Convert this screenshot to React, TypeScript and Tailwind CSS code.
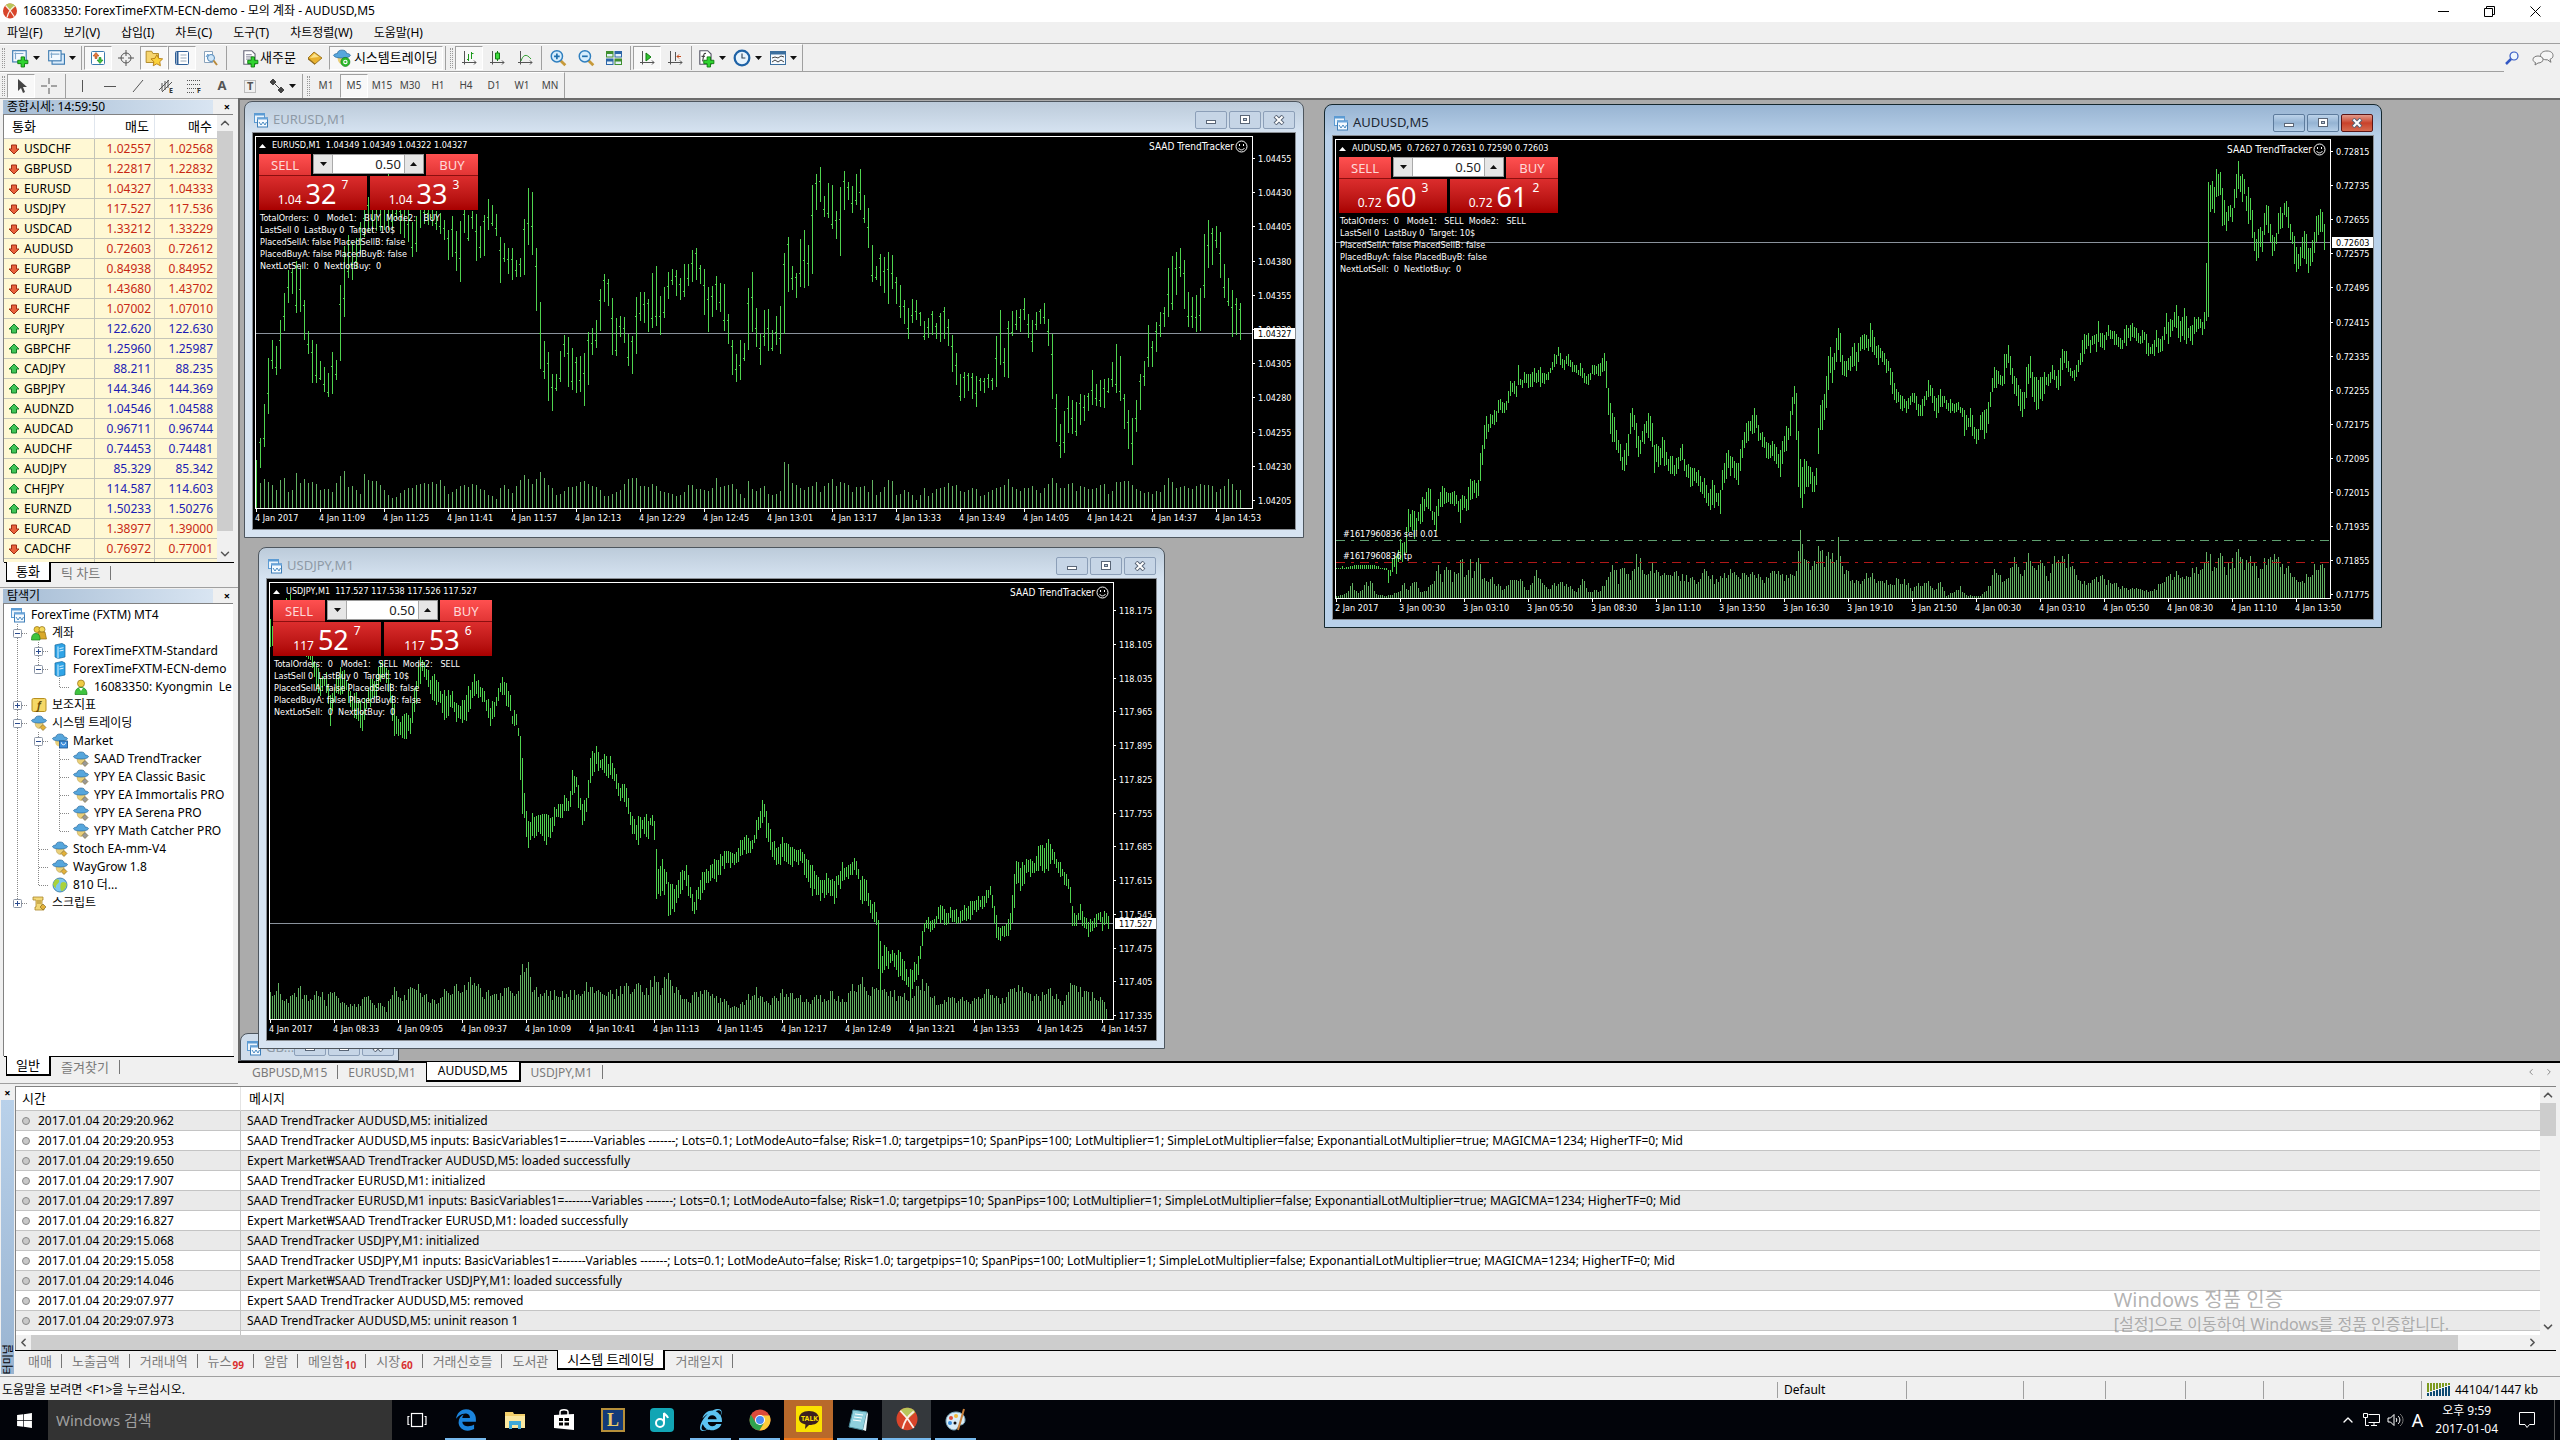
import type { ReactNode } from "react";
import { FaEdgeLegacy, FaInternetExplorer, FaWindows } from "react-icons/fa";
import { ChevronDown, ChevronLeft, ChevronRight, ChevronUp } from "lucide-react";

/* ------------------------------------------------------------------ */
/* Chart data                                                          */
/* ------------------------------------------------------------------ */

// A digitised piece of a series: every point is x, high, low (or x, top)
type Segment = { x: number; y: number; sx: number; sy: number; data: string };

const eurusd: Segment[] = [
  {
    x: -13, y: -33, sx: 2.904, sy: 3,
    data: `47,1080,1220 59,1010,1095 71,900,1035 82,765,935 94,715,795 106,740,828 118,645,803 129,572,678 141,500,600 152,505,580 164,480,648 176,500,633 187,612,730 199,705,768 211,722,866 222,732,846 234,790,838 246,803,885 257,822,893 269,743,880 280,785,836 292,520,776 304,420,628 316,400,510 327,430,545 339,410,500 350,360,460 362,300,400 420,250,390 430,200,390 445,330,385 455,320,350 468,320,420 480,300,412 490,320,430 502,380,480 513,340,450 525,290,370 560,330,380 583,340,404 595,365,425 606,395,492 617,340,468 629,403,520 640,360,548 652,325,378 664,350,430 675,330,380 687,345,498 699,385,468 710,340,468 722,288,375 734,320,380 745,345,412 757,424,576 768,430,475 780,445,530 792,445,543 803,485,530 815,473,530 827,330,525 838,252,418 850,282,476 861,468,656 873,632,834 884,735,836 896,758,912 908,835,938 920,818,858 931,740,845 943,697,755 955,713,890 966,752,866 978,775,882 990,766,873 1001,758,927 1013,682,836 1025,685,743 1036,655,743 1048,543,678 1059,518,592 1071,540,623 1083,608,806 1094,665,758 1106,642,700 1118,652,737 1129,714,815 1141,708,825 1152,565,748 1164,577,640 1175,575,675 1187,602,700 1199,495,680 1210,498,678 1222,608,713 1234,546,635 1245,510,587 1257,507,545 1269,510,600 1280,541,600 1292,480,587 1303,494,552 1315,440,545 1326,444,540 1338,508,555 1350,508,670 1361,573,700 1373,555,640 1384,522,628 1396,553,638 1407,553,700 1419,657,737 1431,734,846 1442,768,845 1454,711,840 1466,735,768 1478,514,743 1489,518,684 1501,654,758 1512,712,804 1524,611,723 1536,632,763 1547,703,752 1559,635,730`,
  },
  {
    x: 527, y: -33, sx: 2.904, sy: 3,
    data: `0,617,762 12,455,700 24,408,568 36,508,570 47,518,595 59,410,558 71,387,565 83,443,558 94,234,517 106,222,303 118,198,308 129,298,358 141,242,353 152,255,390 164,342,420 176,248,477 187,210,312 199,250,297 211,258,348 222,216,312 234,207,333 246,300,376 257,326,456 269,453,561 281,507,536 292,453,562 304,473,582 315,453,615 327,468,558 339,546,623 350,555,660 362,608,673 374,628,726 385,590,658 397,602,660 408,642,680 420,665,726 431,652,713 443,630,705 455,678,718 466,632,726 478,618,716 490,665,743 501,710,826 513,768,862 525,835,912 536,813,890 548,820,868 559,818,900 571,830,926 583,835,862 594,835,882 606,818,860 617,835,872 629,686,858 641,617,780 652,765,840 664,645,834 675,630,690 687,630,690 699,625,698 710,588,655 722,650,723 734,662,762 745,630,678 757,628,672 769,603,672 780,666,750 792,710,930 803,908,1040 815,985,1080 827,920,1053 838,882,990 850,903,1005 861,908,1008 873,877,968 885,888,963 896,876,927 908,798,912 920,865,918 931,837,923 943,837,924 954,835,873 966,777,860 978,723,882 989,777,905 1001,903,1005 1012,933,1053 1024,957,1101 1036,888,972 1047,810,923 1059,777,846 1071,652,792 1082,735,801 1094,652,746 1106,633,700 1117,618,678 1129,477,645 1140,468,627 1152,453,578 1163,441,524 1175,488,645 1187,597,690 1199,588,683 1210,585,700 1222,558,690 1233,372,577 1245,357,488 1256,387,497 1268,375,433 1280,399,557 1291,507,600 1303,540,620 1314,573,725 1326,597,700 1338,610,723`,
  },
];

const eurusdVolume: Segment[] = [
  {
    x: -13, y: -33, sx: 2.904, sy: 3,
    data: `47,1080 59,1155 71,1137 106,1170 118,1125 129,1135 140,1180 152,1165 164,1118 175,1155 187,1137 234,1165 269,1172 281,1142 292,1118 304,1112 315,1172 327,1148 350,1188 362,1116 385,1150 397,1137 420,1175 443,1195 480,1165 513,1158 560,1145 583,1143 606,1188 640,1160 687,1155 720,1180 745,1198 757,1150 792,1180 815,1130 838,1133 850,1165 873,1115 896,1150 920,1185 966,1155 1001,1143 1048,1170 1059,1195 1083,1180 1118,1155 1141,1128 1152,1128 1164,1160 1199,1155 1222,1175 1269,1190 1303,1158 1361,1175 1384,1133 1396,1165 1431,1155 1466,1195 1478,1125 1489,1180 1524,1155 1536,1190 1560,1185`,
  },
  {
    x: 527, y: -33, sx: 2.904, sy: 3,
    data: `0,1170 12,1083 24,1100 36,1145 71,1170 106,1150 118,1175 152,1134 164,1160 187,1143 211,1175 234,1152 257,1175 269,1128 281,1195 292,1170 327,1134 339,1195 362,1160 397,1202 420,1160 431,1190 478,1152 501,1155 536,1180 571,1160 583,1190 641,1160 664,1143 687,1172 734,1155 757,1180 792,1137 815,1165 850,1150 861,1175 873,1150 896,1170 943,1152 954,1188 978,1143 1012,1150 1047,1178 1106,1175 1129,1137 1152,1160 1187,1165 1233,1146 1268,1175 1303,1143 1314,1146 1326,1175 1338,1172`,
  },
];

const usdjpy: Segment[] = [
  {
    x: -12, y: -35, sx: 1.704, sy: 2.904,
    data: `26,230,300 30,240,310 60,150,250 90,240,320 95,328,345 103,345,410 110,380,430 120,380,420 128,440,520 135,400,450 146,365,420 155,390,430 163,430,480 172,440,500 182,480,530 188,450,490 195,410,460 205,380,440 212,350,410 220,340,390 228,380,430 235,440,550 241,500,560 250,510,566 258,500,550 265,500,540 272,420,480 277,360,420 284,325,370 292,360,410 298,395,430 305,390,450 313,420,460 323,440,510 331,425,475 340,455,500 349,465,517 357,450,505 366,415,480 373,390,430 380,405,455 387,405,450 395,450,500 402,475,530 410,440,475 418,395,430 425,405,450 433,430,480 438,490,525 445,490,525 449,540,565 453,570,750 457,705,790 460,750,820 463,795,890 467,800,868 473,795,840 480,795,840 488,780,830 497,795,865 505,795,835 513,760,800 520,760,795 528,735,770 535,740,770 541,655,720 547,680,715 552,720,770 558,770,810 565,730,775 570,640,720 573,605,660 580,595,645 587,620,660 594,610,655 600,630,685 608,630,680 615,680,720 622,705,740 630,705,740 635,740,790 642,790,830 648,810,865 653,805,877 660,795,830 667,800,855 675,785,815 680,795,850 683,880,1035 688,960,1000 694,920,1020 700,945,990 705,1000,1110 710,1000,1060 715,1010,1060 722,980,1035 728,940,990 734,940,985 740,990,1030 748,1030,1085 755,1000,1040 763,945,1000 770,945,980 778,925,970 785,930,970 793,910,950 800,890,930 808,900,930 816,900,930 824,870,910 832,860,895 840,850,890 848,860,895 854,800,850 862,758,810 868,760,800 873,800,870 880,860,905 887,880,920 895,870,920 902,860,905 910,890,930 918,895,930 925,895,925 932,885,925 938,930,975 945,930,1000 952,960,1015 960,980,1025 968,980,1020 977,960,1000 985,985,1040 993,960,1000 1000,935,980 1008,940,970 1015,935,970 1020,905,940 1027,940,965 1032,970,1060 1040,980,1040 1047,1030,1060 1055,1050,1100 1060,1060,1110 1063,1110,1370 1068,1190,1250 1074,1175,1240 1082,1190,1220 1090,1185,1220 1098,1190,1260 1106,1220,1265 1112,1245,1290 1117,1240,1310 1122,1225,1280 1128,1210,1250 1135,1150,1200 1138,1095,1130 1145,1090,1115 1155,1095,1125 1165,1055,1095 1175,1070,1105 1182,1065,1100 1190,1050,1085 1198,1075,1110 1206,1055,1085 1214,1050,1085 1222,1035,1075 1230,1030,1065 1240,1020,1065 1248,1000,1045 1252,985,1020 1257,1045,1080 1263,1090,1140 1268,1130,1160 1274,1100,1145 1282,1100,1140 1288,1060,1110 1292,965,1090 1298,920,960 1305,940,1000 1313,915,960 1321,925,960 1330,925,950 1336,860,940 1343,880,960 1350,850,950 1357,880,925 1365,910,940 1373,930,960 1380,960,990 1387,970,1000 1392,1040,1110 1399,1080,1110 1406,1050,1085 1413,1075,1115 1420,1100,1135 1428,1085,1125 1436,1065,1095 1443,1080,1115 1449,1065,1100 1452,1080,1110`,
  },
];

const usdjpyVolume: Segment[] = [
  {
    x: -12, y: -35, sx: 1.704, sy: 2.904,
    data: `26,1295 30,1320 40,1285 50,1330 75,1300 95,1320 110,1295 120,1340 128,1290 145,1325 165,1345 190,1320 205,1345 215,1330 223,1355 235,1285 245,1320 258,1315 275,1275 290,1315 310,1330 325,1300 345,1295 367,1275 390,1310 420,1310 435,1290 449,1310 453,1222 457,1237 463,1218 470,1290 500,1310 540,1310 575,1280 600,1310 650,1285 665,1310 684,1248 690,1290 705,1258 715,1295 740,1330 750,1300 790,1320 815,1350 855,1300 870,1335 905,1300 940,1330 985,1310 1000,1330 1031,1270 1045,1305 1060,1300 1070,1300 1110,1320 1138,1275 1160,1330 1185,1320 1220,1330 1245,1300 1275,1330 1291,1285 1308,1300 1330,1320 1355,1300 1375,1330 1392,1280 1420,1310 1440,1320 1451,1345`,
  },
];

const audusd: Segment[] = [
  {
    x: -13, y: -36, sx: 2.8, sy: 2.904,
    data: `49,1360,1363 58,1360,1363 60,1320,1363 62,1360,1363 98,1350,1363 160,1352,1363 168,1358,1363 186,1360,1364 189,1365,1403 195,1360,1395 200,1350,1375 206,1325,1365 212,1330,1370 218,1300,1345 224,1262,1330 230,1300,1355 235,1280,1320 241,1250,1300 246,1190,1240 252,1210,1240 260,1177,1270 267,1220,1260 275,1190,1220 285,1165,1220 295,1155,1175 302,1118,1170 308,1145,1190 315,1195,1235 322,1205,1250 328,1180,1225 335,1130,1180 343,1112,1170 350,1140,1175 358,1145,1175 366,1130,1175 374,1140,1175 382,1145,1175 390,1160,1233 397,1140,1200 405,1150,1185 412,1150,1218 418,1108,1155 425,1115,1150 432,1105,1145 440,1110,1145 445,1110,1150 448,1040,1110 453,1000,1050 458,955,1020 464,925,970 470,935,970 478,905,950 485,910,955 492,905,935 500,870,895 507,875,900 514,890,910 522,870,905 528,830,870 535,820,845 542,815,840 548,830,870 556,775,835 563,825,835 572,780,825 580,800,830 588,795,830 596,790,820 604,785,820 612,785,825 620,790,825 628,800,828 636,785,810 644,775,800 652,745,785 660,740,765 668,720,745 676,740,780 684,755,780 690,735,765 698,755,780 706,765,785 714,770,795 722,780,800 730,765,795 738,785,820 746,805,825 754,800,820 762,770,800 770,765,795 778,775,800 786,760,790 793,745,780 799,722,800 804,810,870 810,870,945 816,915,975 824,930,1000 832,975,1010 840,1010,1045 847,1030,1095 853,1020,1080 860,985,1040 867,930,980 872,890,940 878,900,940 885,935,1000 891,990,1040 900,970,1010 908,945,985 917,915,965 924,930,980 930,935,1010 935,1000,1095 942,1010,1055 950,1005,1050 960,985,1045 968,1010,1070 976,1035,1080 985,1040,1085 995,1060,1103 1003,1030,1070 1012,1005,1050 1020,1045,1080 1030,1065,1100 1040,1080,1120 1048,1075,1115 1057,1070,1105 1065,1100,1155 1075,1110,1155 1083,1130,1180 1090,1140,1192 1097,1120,1180 1104,1105,1170 1112,1150,1185 1121,1120,1192 1127,1060,1120 1135,1040,1090 1145,1020,1075 1155,1035,1080 1162,1065,1110 1170,1070,1120 1176,1020,1070 1183,990,1045 1190,960,1005 1200,920,975 1208,930,970 1218,900,950 1226,940,985 1234,965,1000 1242,980,1015 1252,1000,1040 1262,995,1030 1272,985,1040 1280,1020,1060 1288,1030,1090 1294,1000,1040 1302,965,1010 1310,950,1000 1318,890,950 1324,850,900 1329,830,880 1334,870,1000 1338,960,1130 1342,1030,1130 1348,1060,1190 1355,1030,1130 1362,1060,1120 1370,1070,1120 1378,1090,1130 1387,1090,1130 1392,1000,1080 1397,900,1000 1402,860,950 1408,880,960 1415,800,900 1421,770,850 1427,715,800 1432,760,810 1438,740,800 1444,710,770 1451,653,720 1458,700,770 1463,750,790 1470,755,795 1478,760,790 1486,730,770 1493,710,760 1501,745,785 1508,710,745 1517,690,730 1526,685,715 1533,690,735 1540,660,710 1547,690,745 1554,710,755 1561,720,750`,
  },
  {
    x: 527, y: -36, sx: 2.904, sy: 2.904,
    data: `4,690,730 12,685,710 20,700,735 28,662,720 34,680,730 42,710,750 50,720,760 60,730,755 68,740,770 76,755,785 84,765,800 92,800,840 100,815,860 108,850,880 118,860,890 128,865,900 138,875,900 148,850,880 156,855,875 162,865,910 170,885,915 178,880,915 186,860,890 195,820,870 203,830,865 210,850,890 219,865,918 227,850,900 236,848,890 244,855,890 252,870,900 262,880,915 270,885,905 280,880,910 290,890,905 298,890,920 303,915,980 312,930,950 320,900,945 328,925,990 336,960,990 344,950,990 352,900,940 358,900,970 366,895,975 373,870,930 380,820,870 388,790,835 396,780,825 404,795,830 412,795,835 417,745,850 424,745,775 430,725,775 437,760,800 445,785,840 453,815,870 462,820,880 468,840,905 474,870,928 480,780,880 486,770,830 492,740,780 499,780,850 508,810,880 516,815,895 522,800,880 530,800,870 538,795,840 547,795,835 556,770,820 562,770,820 570,800,850 577,800,857 583,740,810 588,730,765 595,730,770 603,750,800 612,780,805 620,790,815 628,765,800 637,740,780 645,705,760 652,675,715 660,680,710 668,690,725 677,685,710 686,690,725 690,645,700 698,680,715 706,690,725 713,670,710 719,650,685 726,660,695 735,665,705 745,680,715 753,695,730 762,690,720 767,655,695 775,660,705 784,655,690 794,650,685 804,665,700 812,680,710 824,663,700 832,690,735 840,710,735 850,710,743 860,675,720 868,690,745 878,685,720 887,620,690 895,640,695 904,645,680 911,620,650 916,604,650 923,630,680 929,640,703 936,615,690 943,620,680 950,650,705 960,670,705 968,620,690 976,630,665 985,620,655 993,640,680 1000,620,660 1004,600,630 1006,258,630 1012,250,625 1013,235,340 1020,240,300 1026,260,330 1033,210,290 1038,240,290 1044,183,260 1050,240,355 1058,310,360 1065,320,370 1072,295,345 1080,310,360 1087,260,320 1092,220,290 1097,186,260 1103,220,270 1110,225,290 1115,220,280 1121,270,320 1126,257,345 1133,300,350 1140,340,400 1146,400,465 1154,390,450 1162,360,430 1168,390,445 1172,340,400 1178,292,360 1184,310,370 1191,360,420 1199,400,455 1206,390,445 1213,340,395 1220,305,365 1226,320,360 1235,267,320 1241,310,345 1248,350,400 1256,390,430 1263,410,480 1270,450,493 1277,430,490 1285,380,440 1292,375,460 1299,430,495 1305,440,498 1312,420,475 1320,380,430 1328,320,375 1334,335,400 1340,310,380 1345,370,430`,
  },
];

const audusdVolume: Segment[] = [
  {
    x: -13, y: -36, sx: 2.8, sy: 2.904,
    data: `49,1440 70,1435 88,1405 105,1435 125,1410 143,1395 155,1435 190,1440 225,1425 233,1397 245,1425 262,1390 280,1430 300,1420 320,1405 329,1350 340,1400 357,1340 370,1390 397,1333 405,1400 418,1332 428,1395 446,1320 455,1390 480,1390 510,1420 550,1385 580,1425 604,1376 630,1420 680,1400 715,1430 733,1388 750,1430 785,1425 805,1380 822,1357 835,1395 849,1345 865,1395 889,1327 905,1370 930,1360 960,1370 1000,1380 1050,1400 1075,1375 1110,1400 1130,1370 1180,1385 1207,1370 1240,1395 1275,1375 1325,1390 1336,1340 1342,1282 1350,1290 1360,1330 1385,1360 1395,1285 1408,1340 1420,1320 1440,1340 1450,1278 1456,1340 1480,1385 1510,1400 1538,1376 1562,1400`,
  },
  {
    x: 527, y: -36, sx: 2.904, sy: 2.904,
    data: `0,1395 28,1376 60,1405 90,1400 128,1398 150,1420 190,1400 215,1420 232,1405 250,1440 290,1418 310,1440 350,1440 370,1420 394,1362 410,1395 430,1375 445,1335 465,1380 492,1327 500,1360 532,1342 545,1390 562,1342 585,1333 608,1338 630,1390 660,1410 690,1385 720,1400 760,1415 800,1420 850,1427 880,1395 905,1380 940,1380 990,1370 1009,1312 1025,1370 1050,1330 1060,1375 1097,1318 1115,1360 1143,1330 1155,1385 1175,1340 1201,1330 1220,1350 1260,1385 1285,1395 1310,1375 1328,1342 1346,1365`,
  },
];

// Repeatable value between -1 and 1
const jitter = (i: number) => {
  const v = Math.sin(i * 127.1 + 3.7) * 43758.5453;
  return (v - Math.floor(v)) * 2 - 1;
};

function resample(segments: Segment[], step: number) {
  const points = segments.flatMap((s) =>
    s.data.split(" ").map((p) => {
      const [x, ...ys] = p.split(",").map(Number);
      return [s.x + x / s.sx, ...ys.map((y) => s.y + y / s.sy)];
    }),
  );
  const last = points[points.length - 1][0];
  const out: number[][] = [];
  let k = 0;
  for (let x = 3; x <= last + 1; x += step) {
    while (k < points.length - 2 && points[k + 1][0] < x) k++;
    const a = points[k];
    const b = points[k + 1];
    const t = Math.min(1, Math.max(0, (x - a[0]) / (b[0] - a[0])));
    out.push([x, ...a.slice(1).map((v, n) => v + (b[n + 1] - v) * t)]);
  }
  return out;
}

function pricePath(segments: Segment[], step: number) {
  return resample(segments, step)
    .map(([x, hi, lo], i) => {
      // dense charts only: move the ends so that the edge stays ragged
      const slack = step < 4 && lo - hi > 5 ? Math.min(5, (lo - hi) * 0.3) : 0;
      const h = Math.round(hi + slack * (jitter(i) - 0.1));
      const l = Math.round(lo - slack * (jitter(i + 500) - 0.1));
      let d = `M${x + 0.5} ${h}V${Math.max(l, h + 1)}`;
      if (step >= 4) {
        const open = Math.round(h + (l - h) * (0.5 + jitter(i + 90) * 0.4));
        d += `M${x - 1} ${open + 0.5}h2`;
      }
      return d;
    })
    .join("");
}

function volumePath(segments: Segment[], step: number, base: number) {
  return resample(segments, step)
    .map(([x, top], i) => {
      const size = (base - top) * (1 + jitter(i + 900) * (step < 4 ? 0.22 : 0.1));
      return `M${x + 0.5} ${base}V${Math.round(base - Math.max(1, size))}`;
    })
    .join("");
}

/* ------------------------------------------------------------------ */
/* Small drawings                                                      */
/* ------------------------------------------------------------------ */

const Svg = ({ size = 16, children }: { size?: number; children: ReactNode }) => (
  <svg width={size} height={size} viewBox="0 0 16 16" fill="none" className="shrink-0 overflow-visible">
    {children}
  </svg>
);

const ChartIcon = () => (
  <Svg>
    <rect x="1.5" y="1.5" width="10" height="9" fill="#eaf4fc" stroke="#5c9bd3" />
    <path d="M1 2.5h11" stroke="#5c9bd3" strokeWidth="2" />
    <rect x="4.500" y="6" width="10" height="9" fill="#f4faff" stroke="#3f7fb8" />
    <path d="M4 6.500h11" stroke="#6aa5da" strokeWidth="2" />
    <path d="M6 10l2 3 2-3 2 3 1.500-3" stroke="#4b8bc2" />
  </Svg>
);

const Mt4Logo = ({ size = 18 }: { size?: number }) => (
  <Svg size={size}>
    <ellipse cx="8" cy="8" rx="7" ry="7.500" fill="#d8442a" />
    <path d="M8 .5C11 .5 13 2 13.500 3.500L8.500 8 3.500 2.500C5 1 6 .5 8 .5z" fill="#b9c65a" />
    <path d="M3.500 2.500L8.500 8l4 6M12.500 3C8 6.500 6 10 5 14.500" stroke="#fbeee6" strokeWidth="1.200" />
  </Svg>
);

const Caret = () => (
  <svg width="7" height="4" viewBox="0 0 7 4" className="shrink-0">
    <path d="M0 0h7L3.500 4z" fill="#111" />
  </svg>
);

const Plus = () => <path d="M9 7h3v3h3v3h-3v3H9v-3H6v-3h3z" fill="#2fd32f" stroke="#0c7a0c" strokeWidth=".8" />;

const NewChartIcon = () => (
  <Svg size={18}>
    <rect x="1.500" y="1.500" width="12" height="10" fill="#f3f9ff" stroke="#3b7ab0" />
    <path d="M3 4h8M4 3v6" stroke="#7fa8cc" />
    <Plus />
  </Svg>
);

const WindowsIcon = () => (
  <Svg size={18}>
    <rect x="4.500" y="4.500" width="11" height="9" fill="#d9ebfb" stroke="#3b7ab0" />
    <rect x="1.500" y="1.500" width="11" height="9" fill="#f3f9ff" stroke="#3b7ab0" />
    <path d="M3 4.500h8M4 3v5" stroke="#7fa8cc" />
  </Svg>
);

const MarketIcon = () => (
  <Svg>
    <rect x="1.500" y="1.500" width="13" height="13" rx="1" fill="#fff" stroke="#3b7ab0" />
    <path d="M6 2.500l3 3.500H7v2.500H5V6H3z" fill="#e8793b" stroke="#a8471a" strokeWidth=".6" />
    <path d="M10 13.500l3-3.500h-2V7.500H9V10H7z" fill="#3fc43f" stroke="#17801a" strokeWidth=".6" />
  </Svg>
);

const TargetIcon = () => (
  <Svg>
    <circle cx="8" cy="8" r="5" stroke="#555" />
    <path d="M8 0v6M8 10v6M0 8h6M10 8h6" stroke="#555" />
  </Svg>
);

const FavIcon = () => (
  <Svg size={18}>
    <path d="M1 2h5l1 2h5v8H1z" fill="#f6d56e" stroke="#a98220" strokeWidth=".8" />
    <path d="M10.500 5l1.600 3.300 3.600.5-2.600 2.500.6 3.600-3.200-1.700-3.200 1.700.6-3.600-2.600-2.500 3.600-.5z" fill="#fbd23c" stroke="#b57d12" strokeWidth=".8" />
  </Svg>
);

const ListIcon = () => (
  <Svg>
    <rect x="1.500" y="1.500" width="13" height="13" rx="1" fill="#fff" stroke="#2f5f97" />
    <path d="M3.500 2v12" stroke="#2f5f97" strokeWidth="2" />
    <path d="M6.500 5h6M6.500 8h6M6.500 11h6" stroke="#9ab" />
  </Svg>
);

const TesterIcon = () => (
  <Svg>
    <path d="M2.500 1.500h8v11h-8z" fill="#fff" stroke="#8aa3bb" />
    <path d="M4 7l2-3v5" stroke="#5f9bd0" />
    <circle cx="9" cy="8" r="3.500" fill="#cfe6f8" stroke="#4f86b8" />
    <path d="M11.500 10.500L15 15" stroke="#b98a3c" strokeWidth="2" />
  </Svg>
);

const OrderIcon = () => (
  <Svg size={18}>
    <path d="M2.500 1.500h7l3 3v9h-10z" fill="#fff" stroke="#667" />
    <path d="M4.500 5h5M4.500 7h6M4.500 9h4" stroke="#99a" />
    <Plus />
  </Svg>
);

const GoldIcon = () => (
  <Svg>
    <path d="M1 8l6-6 8 6-7 6z" fill="#e9b22f" stroke="#8c6410" strokeWidth=".8" />
    <path d="M1 8l7 6v1L1 9.500z" fill="#8c6410" />
    <path d="M3 8l4.500-4.500L12 7z" fill="#fbe28a" />
  </Svg>
);

const ExpertIcon = ({ tone = "#e3b13a" }: { tone?: string }) => (
  <Svg>
    <path d="M4 6c0 5 1 7 4.500 7.500L12 9V6z" fill="#e9cf7a" stroke="#b09440" strokeWidth=".5" />
    <path d="M.5 5.500C1 4.500 3 4 4 4c0-2 1.500-3 4-3s4 1 4 3c1.500 0 3 .5 3.500 1.500C15 7.500 11 8 8 8S1 7.500.5 5.500z" fill="#56a6dc" stroke="#2c6c9f" strokeWidth=".7" />
    <path d="M12 9.500l3 3-3 3-3-3z" fill={tone} stroke="#77621f" strokeWidth=".6" />
  </Svg>
);

const AutoIcon = () => (
  <Svg size={18}>
    <path d="M4 6c0 5 1 7 4.500 7.500L12 9V6z" fill="#e9cf7a" />
    <path d="M.5 5.500C1 4.500 3 4 4 4c0-2 1.500-3 4-3s4 1 4 3c1.500 0 3 .5 3.500 1.500C15 7.500 11 8 8 8S1 7.500.5 5.500z" fill="#56a6dc" stroke="#2c6c9f" strokeWidth=".7" />
    <circle cx="11" cy="11.500" r="4" fill="#2dbb2d" stroke="#0f7b12" strokeWidth=".6" />
    <circle cx="11" cy="11.500" r="1.500" stroke="#fff" />
  </Svg>
);

const axes = <path d="M3.500 1v13.500M1 12.500h14M13 10.500l2 2-2 2" stroke="#555" />;
const BarsIcon = () => <Svg>{axes}<path d="M7.500 4v7M10.500 2v7M7 9.500H6M11 3.500h1.500" stroke="#1b9a1b" /></Svg>;
const CandleIcon = () => <Svg>{axes}<path d="M8.500 1v10" stroke="#117c11" /><path d="M6.500 3h4v6h-4z" fill="#3edb3e" stroke="#117c11" /></Svg>;
const LineIcon = () => <Svg>{axes}<path d="M4 11c2-6 5-8 10-2" stroke="#2f9e2f" /></Svg>;
const ScrollIcon = () => <Svg>{axes}<path d="M7 3l5 4-5 4z" fill="#2fc32f" stroke="#117c11" /></Svg>;
const ShiftIcon = () => <Svg>{axes}<path d="M8.500 2v9" stroke="#555" /><path d="M14 6.500H10M12 4.500l-2 2 2 2" stroke="#c64a1b" /></Svg>;

const ZoomIcon = ({ minus }: { minus?: boolean }) => (
  <Svg size={18}>
    <path d="M10 10l4.500 4.500" stroke="#c79a3a" strokeWidth="2.500" />
    <circle cx="7" cy="6.500" r="5" fill="#d7edfc" stroke="#2f7fbf" strokeWidth="1.300" />
    <path d={minus ? "M4.500 6.500h5" : "M4.500 6.500h5M7 4v5"} stroke="#1f6fae" strokeWidth="1.500" />
  </Svg>
);

const TileIcon = () => (
  <Svg>
    <path d="M0 1h7.500v6.500H0zM8.500 8.500H16V15H8.500z" fill="#3f8f2f" />
    <path d="M8.500 1H16v6.500H8.500zM0 8.500h7.500V15H0z" fill="#2c66a8" />
    <path d="M1 4h5.500v2.500H1zM9.500 4H15v2.500H9.500zM1 11.500h5.500V14H1zM9.500 11.500H15V14H9.500z" fill="#e6f1fa" />
  </Svg>
);

const IndicatorIcon = () => (
  <Svg size={18}>
    <path d="M2.500 1.500h7l3 3v9h-10z" fill="#fff" stroke="#556" />
    <path d="M8 4c-2-.5-2 1-2.300 3L5 11M4 6.500h3" stroke="#444" />
    <Plus />
  </Svg>
);

const ClockIcon = () => (
  <Svg size={18}>
    <circle cx="8" cy="8" r="6.500" fill="#e8f4fd" stroke="#1d62a6" strokeWidth="2" />
    <path d="M8 4v4h3" stroke="#345" />
  </Svg>
);

const TemplateIcon = () => (
  <Svg>
    <rect x=".5" y="1.500" width="15" height="13" fill="#f5faff" stroke="#3b6f9f" />
    <path d="M0 3h16" stroke="#3b6f9f" strokeWidth="3" />
    <path d="M2 8l3-1 3 1 3-2 3 1M2 12l3-2 3 2 3-2 3 2" stroke="#444" />
  </Svg>
);

const Arrow = ({ up }: { up: boolean }) => (
  <svg width="12" height="12" viewBox="0 0 12 12" className="shrink-0">
    <path
      d={up ? "M6 1l5 5H8.500v4h-5V6H1z" : "M6 11l5-5H8.500V2h-5v4H1z"}
      fill={up ? "#3fc455" : "#e8613a"}
      stroke={up ? "#157a2a" : "#a02c12"}
    />
  </svg>
);

/* ------------------------------------------------------------------ */
/* Tool bars                                                           */
/* ------------------------------------------------------------------ */

type ToolProps = { label: string; menu?: boolean; pressed?: boolean; children: ReactNode };

const Tool = ({ label, menu, pressed, children }: ToolProps) => (
  <button
    aria-label={label}
    className={`flex h-6 shrink-0 items-center justify-center gap-1 ${menu ? "w-9" : "w-7"} ${
      pressed ? "border border-[#a0a0a0] border-r-white border-b-white bg-[#f8f8f8]" : ""
    }`}
  >
    {children}
    {menu && <Caret />}
  </button>
);

const Grip = () => <div className="mx-[2px] h-5 w-[3px] border-x border-dotted border-[#999]" />;
const Sep = () => <div className="mx-[2px] h-6 w-px bg-[#a0a0a0]" />;

const periods = ["M1", "M5", "M15", "M30", "H1", "H4", "D1", "W1", "MN"];

function Toolbars() {
  return (
    <div className="flex flex-col items-start">
      <div className="w-full border-t border-[#a0a0a0]">
        <div className="flex h-[27px] w-fit items-center border-t border-r border-t-white border-r-[#a0a0a0]">
          <Grip />
          <Tool label="New chart" menu><NewChartIcon /></Tool>
          <Tool label="Profiles" menu><WindowsIcon /></Tool>
          <Sep />
          <Tool label="Market watch" pressed><MarketIcon /></Tool>
          <Tool label="Data window"><TargetIcon /></Tool>
          <Tool label="Navigator" pressed><FavIcon /></Tool>
          <Tool label="Terminal" pressed><ListIcon /></Tool>
          <Tool label="Strategy tester"><TesterIcon /></Tool>
          <Sep />
          <button className="flex h-6 items-center gap-px pr-[5px] pl-3 text-[13px]">
            <OrderIcon />새주문
          </button>
          <Tool label="MetaEditor"><GoldIcon /></Tool>
          <button className="flex h-6 items-center gap-[3px] border border-[#a0a0a0] border-r-white border-b-white bg-[#f8f8f8] pr-1 pl-[3px] text-[13px]">
            <AutoIcon />시스템트레이딩
          </button>
          <Sep />
          <Grip />
          <Tool label="Bar chart" pressed><BarsIcon /></Tool>
          <Tool label="Candlesticks"><CandleIcon /></Tool>
          <Tool label="Line chart"><LineIcon /></Tool>
          <Sep />
          <Tool label="Zoom in"><ZoomIcon /></Tool>
          <Tool label="Zoom out"><ZoomIcon minus /></Tool>
          <Tool label="Tile windows"><TileIcon /></Tool>
          <Sep />
          <Tool label="Auto scroll" pressed><ScrollIcon /></Tool>
          <Tool label="Chart shift"><ShiftIcon /></Tool>
          <Sep />
          <Tool label="Indicators" menu><IndicatorIcon /></Tool>
          <Tool label="Periods" menu><ClockIcon /></Tool>
          <Tool label="Templates" menu><TemplateIcon /></Tool>
        </div>
      </div>
      <div className="w-full border-t border-[#a0a0a0]">
        <div className="flex h-[26px] w-fit items-center border-t border-r border-t-white border-r-[#a0a0a0]">
          <Grip />
          <Tool label="Cursor" pressed>
            <Svg><path d="M5 1v12l3-3 2 5 2-1-2-5h4z" fill="#444" /></Svg>
          </Tool>
          <Tool label="Crosshair">
            <Svg><path d="M8 0v6M8 10v6M0 8h6M10 8h6" stroke="#555" /></Svg>
          </Tool>
          <Sep />
          <Tool label="Vertical line"><Svg><path d="M8.500 2v12" stroke="#555" /></Svg></Tool>
          <Tool label="Horizontal line"><Svg><path d="M2 8.500h12" stroke="#555" /></Svg></Tool>
          <Tool label="Trendline"><Svg><path d="M3 14L13 2" stroke="#555" /></Svg></Tool>
          <Tool label="Equidistant channel">
            <Svg>
              <path d="M1 12L11 2M4 14L14 4M4 5v8M7 3v9M10 2v8" stroke="#555" />
              <text x="11" y="15" fontSize="7" fontWeight="700" fill="#333">E</text>
            </Svg>
          </Tool>
          <Tool label="Fibonacci">
            <Svg>
              <path d="M1 2.500h14M1 6.500h14M1 10.500h14M1 14.500h8" stroke="#555" strokeDasharray="1 1" />
              <text x="11" y="15" fontSize="7" fontWeight="700" fill="#333">F</text>
            </Svg>
          </Tool>
          <Tool label="Text"><span className="text-[13px] font-bold text-[#555]">A</span></Tool>
          <Tool label="Text label">
            <Svg>
              <rect x="2.500" y="2.500" width="11" height="12" stroke="#888" strokeDasharray="1 1" />
              <text x="5" y="12" fontSize="11" fontWeight="700" fill="#555">T</text>
            </Svg>
          </Tool>
          <Tool label="Arrows" menu>
            <Svg><path d="M4 1l3 3-3 3-3-3zM6 6l4 4M12 9l3 3-3 3-3-3z" fill="#444" stroke="#444" /></Svg>
          </Tool>
          <Sep />
          <Grip />
          {periods.map((p) => (
            <button
              key={p}
              className={`h-6 w-7 text-[10px] text-[#444] ${
                p === "M5" ? "border border-[#a0a0a0] border-r-white border-b-white bg-[#f8f8f8]" : ""
              }`}
            >
              {p}
            </button>
          ))}
        </div>
      </div>
    </div>
  );
}

/* ------------------------------------------------------------------ */
/* Left dock                                                           */
/* ------------------------------------------------------------------ */

const quotes = [
  ["USDCHF", "1.02557", "1.02568", "d"],
  ["GBPUSD", "1.22817", "1.22832", "d"],
  ["EURUSD", "1.04327", "1.04333", "d"],
  ["USDJPY", "117.527", "117.536", "d"],
  ["USDCAD", "1.33212", "1.33229", "d"],
  ["AUDUSD", "0.72603", "0.72612", "d"],
  ["EURGBP", "0.84938", "0.84952", "d"],
  ["EURAUD", "1.43680", "1.43702", "d"],
  ["EURCHF", "1.07002", "1.07010", "d"],
  ["EURJPY", "122.620", "122.630", "u"],
  ["GBPCHF", "1.25960", "1.25987", "u"],
  ["CADJPY", "88.211", "88.235", "u"],
  ["GBPJPY", "144.346", "144.369", "u"],
  ["AUDNZD", "1.04546", "1.04588", "u"],
  ["AUDCAD", "0.96711", "0.96744", "u"],
  ["AUDCHF", "0.74453", "0.74481", "u"],
  ["AUDJPY", "85.329", "85.342", "u"],
  ["CHFJPY", "114.587", "114.603", "u"],
  ["EURNZD", "1.50233", "1.50276", "u"],
  ["EURCAD", "1.38977", "1.39000", "d"],
  ["CADCHF", "0.76972", "0.77001", "d"],
];

const DockTitle = ({ children }: { children: ReactNode }) => (
  <div className="flex h-[15px] items-center justify-between pr-[5px] pl-[3px]">
    <h2 className="flex h-[14px] flex-1 items-center bg-linear-to-r from-[#a5bcd4] to-[#d9e5f2] pl-1 text-xs leading-[14px]">
      {children}
    </h2>
    <button aria-label="Close" className="ml-2 w-3 text-[11px] leading-none font-bold">×</button>
  </div>
);

const DockTabs = ({ tabs }: { tabs: string[] }) => (
  <div className="mx-1 flex h-[25px] items-start border-t border-black pl-[2px] text-[13px] leading-[18px] text-[#7a7a7a]">
    {tabs.map((t, i) =>
      i === 0 ? (
        <button key={t} className="-mt-px h-5 w-[45px] border border-t-0 border-r-2 border-b-2 border-black bg-white text-black">
          {t}
        </button>
      ) : (
        <button key={t} className="mt-[3px] h-[14px] border-r border-[#777] px-[10px] leading-[14px]">
          {t}
        </button>
      ),
    )}
  </div>
);

function MarketWatch() {
  return (
    <section className="border-b border-[#a0a0a0]">
      <DockTitle>종합시세: 14:59:50</DockTitle>
      <div className="mr-[5px] ml-[3px] flex border-t border-l border-[#828282] bg-white">
        <table className="flex-1 border-separate border-spacing-0 bg-[#fff8d4] text-xs">
          <thead>
            <tr className="h-6 bg-white text-[13px] leading-none">
              <th className="w-[91px] border-r border-b border-[#c8c8c8] border-r-[#e0e6ee] p-0 pl-2 text-left font-normal">통화</th>
              <th className="w-[60px] border-r border-b border-[#c8c8c8] border-r-[#e0e6ee] p-0 pr-[5px] text-right font-normal">매도</th>
              <th className="border-b border-[#c8c8c8] p-0 pr-[5px] text-right font-normal">매수</th>
            </tr>
          </thead>
          <tbody>
            {quotes.map(([name, bid, ask, dir]) => (
              <tr key={name} className={`h-5 ${dir === "u" ? "text-[#1c1cb4]" : "text-[#c82814]"}`}>
                <td className="border-r border-b border-[#c4c4b8] p-0 pl-1 leading-none text-black">
                  <div className="flex items-center gap-1">
                    <Arrow up={dir === "u"} />
                    {name}
                  </div>
                </td>
                <td className="border-r border-b border-[#c4c4b8] p-0 pr-[3px] text-right leading-none">{bid}</td>
                <td className="border-b border-[#c4c4b8] p-0 pr-1 text-right leading-none">{ask}</td>
              </tr>
            ))}
            <tr className="h-[3px]">
              <td className="border-r border-[#c4c4b8] p-0" />
              <td className="border-r border-[#c4c4b8] p-0" />
              <td className="p-0" />
            </tr>
          </tbody>
        </table>
        <div className="flex w-4 flex-col items-center justify-between bg-[#f0f0f0]">
          <ChevronUp size={14} strokeWidth={2.5} className="my-px text-[#555]" />
          <div className="mb-[36px] w-full flex-1 bg-[#cdcdcd]" />
          <ChevronDown size={14} strokeWidth={2.5} className="-mt-5 mb-px text-[#555]" />
        </div>
      </div>
      <DockTabs tabs={["통화", "틱 차트"]} />
    </section>
  );
}

const AccountsIcon = () => (
  <Svg>
    <circle cx="6" cy="4.500" r="3" fill="#edc93c" stroke="#8f6d13" strokeWidth=".7" />
    <circle cx="11" cy="4.500" r="3" fill="#f3d85c" stroke="#8f6d13" strokeWidth=".7" />
    <path d="M7 7h7l1.500 7H7z" fill="#d9a92a" stroke="#8f6d13" strokeWidth=".7" />
    <path d="M.5 15C.5 10 2 8.500 5 8.500s4 2 4 6.500z" fill="#3fc43f" stroke="#177d19" strokeWidth=".7" />
  </Svg>
);

const ServerIcon = () => (
  <Svg>
    <path d="M3 2l7-1.500L13 2v12l-7 1.500L3 14z" fill="#2fa4e7" stroke="#14679c" strokeWidth=".7" />
    <path d="M6 3.500v12M7.500 5.500l4-.8M7.500 8l4-.8" stroke="#d9f1ff" />
  </Svg>
);

const UserIcon = () => (
  <Svg>
    <circle cx="8" cy="4.500" r="3.500" fill="#efcb44" stroke="#8f6d13" strokeWidth=".7" />
    <path d="M2 15.500C2 11 4 8.500 8 8.500s6 2.500 6 7z" fill="#3fc43f" stroke="#177d19" strokeWidth=".7" />
    <path d="M6 9l2 3 2-3z" fill="#fff" />
  </Svg>
);

const FunctionIcon = () => (
  <Svg>
    <rect x="1" y="1.500" width="14" height="13" rx="1.500" fill="#f5d867" stroke="#b78f1f" />
    <text x="6" y="12" fontSize="10" fontStyle="italic" fontWeight="700" fill="#6b4d08">f</text>
  </Svg>
);

const StoreIcon = () => (
  <Svg>
    <path d="M3 6c0 5 1 7 4.500 7.500L12 9V6z" fill="#e9cf7a" />
    <path d="M.5 5.500C1 4.500 3 4 4 4c0-2 1.500-3 4-3s4 1 4 3c1.500 0 3 .5 3.500 1.500C15 7.500 11 8 8 8S1 7.500.5 5.500z" fill="#56a6dc" stroke="#2c6c9f" strokeWidth=".7" />
    <rect x="7.500" y="8" width="8" height="7" fill="#3f8fdb" stroke="#174f8a" strokeWidth=".8" />
    <path d="M9.500 9.500c0 3 4 3 4 0" stroke="#fff" />
  </Svg>
);

const GlobeIcon = () => (
  <Svg>
    <circle cx="8" cy="8" r="7" fill="#7cc6ef" stroke="#2d6f9c" strokeWidth=".8" />
    <path d="M3 3c3-2 5 0 4 2S4 7 4 10 1 8 1 7zM9 6c2-2 5-1 5.500 1S12 14 10 14 8 8 9 6z" fill="#a9d23a" />
  </Svg>
);

const ScriptIcon = () => (
  <Svg>
    <path d="M2 2h10v3h-1v7h2v3H4v-3h1V5H2z" fill="#f2d877" stroke="#a9852a" strokeWidth=".8" />
    <path d="M6 6h4M6 8h4" stroke="#a9852a" />
    <path d="M12 9l3 3-3 3-3-3z" fill="#e3b13a" stroke="#77621f" strokeWidth=".6" />
  </Svg>
);

// guides: | line, t tee, l elbow, +/- box with the line going on, P/M box at the end
const tree: { guides: string; icon: ReactNode; label: string }[] = [
  { guides: "", icon: <ChartIcon />, label: "ForexTime (FXTM) MT4" },
  { guides: "-", icon: <AccountsIcon />, label: "계좌" },
  { guides: "|+", icon: <ServerIcon />, label: "ForexTimeFXTM-Standard" },
  { guides: "|M", icon: <ServerIcon />, label: "ForexTimeFXTM-ECN-demo" },
  { guides: "| l", icon: <UserIcon />, label: "16083350: Kyongmin  Le" },
  { guides: "+", icon: <FunctionIcon />, label: "보조지표" },
  { guides: "-", icon: <ExpertIcon />, label: "시스템 트레이딩" },
  { guides: "|-", icon: <StoreIcon />, label: "Market" },
  { guides: "||t", icon: <ExpertIcon tone="#999" />, label: "SAAD TrendTracker" },
  { guides: "||t", icon: <ExpertIcon tone="#999" />, label: "YPY EA Classic Basic" },
  { guides: "||t", icon: <ExpertIcon tone="#999" />, label: "YPY EA Immortalis PRO" },
  { guides: "||t", icon: <ExpertIcon tone="#999" />, label: "YPY EA Serena PRO" },
  { guides: "||l", icon: <ExpertIcon tone="#999" />, label: "YPY Math Catcher PRO" },
  { guides: "|t", icon: <ExpertIcon />, label: "Stoch EA-mm-V4" },
  { guides: "|t", icon: <ExpertIcon />, label: "WayGrow 1.8" },
  { guides: "|l", icon: <GlobeIcon />, label: "810 더..." },
  { guides: "P", icon: <ScriptIcon />, label: "스크립트" },
];

function Guide({ kind }: { kind: string }) {
  const ends = "lPM".includes(kind);
  return (
    <svg width="21" height="18" viewBox="0 0 21 18" fill="none" className="shrink-0">
      {kind !== " " && <path d={`M10.500 0V${ends ? 10 : 18}`} stroke="#888" strokeDasharray="1 1" />}
      {!"| ".includes(kind) && <path d="M11 9.500h10" stroke="#888" strokeDasharray="1 1" />}
      {"+-PM".includes(kind) && (
        <>
          <rect x="6.500" y="5.500" width="8" height="8" rx="1" fill="#fff" stroke="#8b95a5" />
          <path d={"+P".includes(kind) ? "M8 9.500h5M10.500 7v5" : "M8 9.500h5"} stroke="#2a4b8f" />
        </>
      )}
    </svg>
  );
}

function Navigator() {
  return (
    <section className="flex min-h-0 flex-1 flex-col border-b border-[#a0a0a0] pb-[2px]">
      <DockTitle>탐색기</DockTitle>
      <ul className="mr-[5px] ml-[3px] flex-1 overflow-hidden border-t border-l border-[#828282] bg-white pt-[2px] pl-[3px] text-xs">
        {tree.map((n) => (
          <li key={n.label} className="flex h-[18px] items-center whitespace-pre">
            {n.guides.split("").map((g, i) => (
              <Guide key={i} kind={g} />
            ))}
            <span className="flex w-[21px] shrink-0 justify-center">{n.icon}</span>
            <span className="ml-[3px] leading-none">{n.label}</span>
          </li>
        ))}
      </ul>
      <DockTabs tabs={["일반", "즐겨찾기"]} />
    </section>
  );
}

/* ------------------------------------------------------------------ */
/* Chart windows                                                       */
/* ------------------------------------------------------------------ */

function WindowButtons({ active }: { active?: boolean }) {
  const look = active
    ? "border-[#5d7b9c] bg-linear-to-b from-[#bcd3ea] via-[#94b3d3] to-[#b6cfe8]"
    : "border-[#8c9fb8] bg-[#c6d5e6]";
  return (
    <div className="flex gap-[2px]">
      <button aria-label="Minimize" className={`flex h-[18px] w-8 items-center justify-center rounded-xs border ${look}`}>
        <svg width="12" height="10" viewBox="0 0 12 10"><rect x="1.500" y="5.500" width="9" height="3" fill="#fff" stroke="#5a6677" /></svg>
      </button>
      <button aria-label="Maximize" className={`flex h-[18px] w-8 items-center justify-center rounded-xs border ${look}`}>
        <svg width="12" height="10" viewBox="0 0 12 10">
          <rect x="1.500" y=".5" width="9" height="8" fill="#fff" stroke="#5a6677" />
          <rect x="4.500" y="3.500" width="3" height="2" fill="#b9c8da" stroke="#5a6677" />
        </svg>
      </button>
      <button
        aria-label="Close"
        className={`flex h-[18px] w-8 items-center justify-center rounded-xs border ${
          active ? "border-[#5c1616] bg-linear-to-b from-[#e29a8a] via-[#c8412a] to-[#d66a4f]" : look
        }`}
      >
        <svg width="12" height="10" viewBox="0 0 12 10">
          <path d="M2 1l8 8M10 1L2 9" stroke="#5a6677" strokeWidth="4" />
          <path d="M2.500 1.500l7 7M9.500 1.500l-7 7" stroke="#fff" strokeWidth="2" />
        </svg>
      </button>
    </div>
  );
}

type Quote = { lead: string; big: string; small: string };

const Price = ({ lead, big, small }: Quote) => (
  <button className="flex h-[34px] flex-1 items-end justify-center bg-linear-to-b from-[#dc2d2d] to-[#a80000] pb-[3px] text-white">
    <span className="text-xs leading-[14px]">{lead}</span>
    <span className="ml-1 text-[27px] leading-[27px]">{big}</span>
    <span className="ml-[5px] self-start text-xs leading-[18px]">{small}</span>
  </button>
);

function OneClick({ symbol, sell, buy }: { symbol: string; sell: Quote; buy: Quote }) {
  return (
    <div className="flex w-[219px] flex-col">
      <div className="flex h-[22px] items-stretch justify-between">
        <button className="w-[52px] border-b border-[#8c0f0f] bg-linear-to-b from-[#ff5050] to-[#e23535] text-[13px] leading-[20px] text-[#ffd9d9]">
          SELL
        </button>
        <div className="flex h-5 w-[111px] border border-[#9a9a9a] bg-white">
          <button aria-label="Decrease volume" className="flex w-[19px] items-center justify-center border-r border-[#aaa] bg-[#e6e6e6]"><Caret /></button>
          <input aria-label={`${symbol} volume`} defaultValue="0.50" className="w-0 flex-1 pr-[3px] text-right text-[13px] leading-none text-[#222]" />
          <button aria-label="Increase volume" className="flex w-[19px] rotate-180 items-center justify-center border-r border-[#aaa] bg-[#e6e6e6]"><Caret /></button>
        </div>
        <button className="w-[52px] border-b border-[#8c0f0f] bg-linear-to-b from-[#ff5050] to-[#e23535] text-[13px] leading-[20px] text-[#ffd9d9]">
          BUY
        </button>
      </div>
      <div className="flex gap-[3px]">
        <Price {...sell} />
        <Price {...buy} />
      </div>
    </div>
  );
}

type ChartProps = {
  place: string;
  title: string;
  ohlc: string;
  mode: string;
  active?: boolean;
  width: number;
  height: number;
  step: number;
  price: Segment[];
  volume: Segment[];
  times: string[];
  scale: string[];
  scaleTop: number;
  scaleStep: number;
  last: string;
  lastY: number;
  sell: Quote;
  buy: Quote;
  orders?: { y: number; text: string; color: string }[];
};

const chartFont = "font-['DejaVu_Sans_Condensed','Noto_Sans',sans-serif]";

function ChartWindow(p: ChartProps) {
  const right = p.width - 43;
  const bottom = p.height - 21;
  return (
    <section
      className={`absolute rounded-t-lg border px-2 pb-2 ${p.place} ${
        p.active
          ? "border-[#16282e] bg-[#b9d1ea] bg-linear-to-b from-[#98b4d2] from-0% to-[#b9d1ea] to-[32px]"
          : "border-[#4e565e] bg-[#d7e4f2] bg-linear-to-b from-[#bccbda] from-0% to-[#d7e4f2] to-[32px]"
      }`}
    >
      <header className="flex h-[31px] items-center justify-between pt-[6px] pb-px">
        <h2 className={`flex items-center gap-1 text-[13px] ${p.active ? "text-[#1c2733]" : "text-[#8e9aa6]"}`}>
          <ChartIcon />
          {p.title}
        </h2>
        <WindowButtons active={p.active} />
      </header>
      <div className={`relative bg-black text-[9px] text-white outline outline-[#8a8f95] ${chartFont}`}>
        <svg width={p.width} height={p.height} fill="none" className="block">
          <g shapeRendering="crispEdges">
            <path d={volumePath(p.volume, p.step, bottom)} stroke="#62b162" />
            <path d={`M3 ${p.lastY + 0.5}H${right}`} stroke="#8a929c" />
            {p.orders?.map((o) => (
              <path key={o.text} d={`M3 ${o.y + 0.5}H${right}`} stroke={o.color} strokeDasharray="9 6 3 6" />
            ))}
            <path d={pricePath(p.price, p.step)} stroke="#4fd44f" />
            <path d={`M2.500 ${bottom}V3.500H${right + 0.5}V${bottom + 0.5}H2`} stroke="#fff" />
            {p.times.map((t, i) => (
              <path key={t} d={`M${3.5 + i * 64} ${bottom}v4`} stroke="#fff" />
            ))}
          </g>
          <g fill="#fff">
            {p.times.map((t, i) => (
              <text key={t} x={2 + i * 64} y={p.height - 8}>{t}</text>
            ))}
            {p.scale.map((s, i) => (
              <g key={s}>
                <path d={`M${right + 1} ${Math.round(p.scaleTop + i * p.scaleStep)}.5h2`} stroke="#fff" />
                <text x={right + 6} y={Math.round(p.scaleTop + i * p.scaleStep) + 4}>{s}</text>
              </g>
            ))}
            {p.orders?.map((o) => (
              <text key={o.text} x="10" y={o.y - 3}>{o.text}</text>
            ))}
            <rect x={right + 2} y={p.lastY - 5} width="41" height="11" />
            <text x={right + 6} y={p.lastY + 4} fill="#000">{p.last}</text>
          </g>
        </svg>
        <div className="absolute top-1 left-[6px]">
          <div className="flex h-[17px] items-center gap-[6px] whitespace-pre">
            <svg width="7" height="4" viewBox="0 0 7 4"><path d="M0 4h7L3.500 0z" fill="#fff" /></svg>
            {p.title}  {p.ohlc}
          </div>
          <div className="font-['Noto_Sans',sans-serif]">
            <OneClick symbol={p.title} sell={p.sell} buy={p.buy} />
          </div>
          <p className="mt-[2px] pl-px leading-3 whitespace-pre">
            {`TotalOrders:  0   Mode1:   ${p.mode}  Mode2:   ${p.mode}\nLastSell 0  LastBuy 0  Target: 10$\nPlacedSellA: false PlacedSellB: false\nPlacedBuyA: false PlacedBuyB: false\nNextLotSell:  0  NextlotBuy:  0`}
          </p>
        </div>
        <div className="absolute top-[7px] right-[47px] flex items-center gap-px text-[10px] leading-3">
          SAAD TrendTracker
          <svg width="13" height="13" viewBox="0 0 13 13" fill="none" stroke="#fff">
            <circle cx="6.500" cy="6.500" r="5.500" />
            <path d="M4.500 4v2M8.500 4v2M3.500 8c1.500 2.500 4.500 2.500 6 0" />
          </svg>
        </div>
      </div>
    </section>
  );
}

function Workspace() {
  return (
    <div className="relative flex-1 overflow-hidden border-t-2 border-l-2 border-[#6b6b6b] bg-[#ababab]">
      <section className="absolute bottom-0 left-0 flex h-7 w-[159px] items-start justify-between rounded-t-lg border border-[#4e565e] bg-[#cfdcea] px-[5px] pt-1 text-[13px] text-[#8e9aa6]">
        <h2 className="flex items-center gap-1"><ChartIcon />GB...</h2>
        <WindowButtons />
      </section>
      <ChartWindow
        place="left-1 top-px"
        title="EURUSD,M1"
        ohlc="1.04349 1.04349 1.04322 1.04327"
        mode="BUY"
        width={1042}
        height={396}
        step={4}
        price={eurusd}
        volume={eurusdVolume}
        times={["4 Jan 2017", "4 Jan 11:09", "4 Jan 11:25", "4 Jan 11:41", "4 Jan 11:57", "4 Jan 12:13", "4 Jan 12:29", "4 Jan 12:45", "4 Jan 13:01", "4 Jan 13:17", "4 Jan 13:33", "4 Jan 13:49", "4 Jan 14:05", "4 Jan 14:21", "4 Jan 14:37", "4 Jan 14:53"]}
        scale={["1.04455", "1.04430", "1.04405", "1.04380", "1.04355", "1.04330", "1.04305", "1.04280", "1.04255", "1.04230", "1.04205"]}
        scaleTop={25}
        scaleStep={34.2}
        last="1.04327"
        lastY={200}
        sell={{ lead: "1.04", big: "32", small: "7" }}
        buy={{ lead: "1.04", big: "33", small: "3" }}
      />
      <ChartWindow
        place="left-[18px] top-[447px]"
        title="USDJPY,M1"
        ohlc="117.527 117.538 117.526 117.527"
        mode="SELL"
        width={889}
        height={461}
        step={2}
        price={usdjpy}
        volume={usdjpyVolume}
        times={["4 Jan 2017", "4 Jan 08:33", "4 Jan 09:05", "4 Jan 09:37", "4 Jan 10:09", "4 Jan 10:41", "4 Jan 11:13", "4 Jan 11:45", "4 Jan 12:17", "4 Jan 12:49", "4 Jan 13:21", "4 Jan 13:53", "4 Jan 14:25", "4 Jan 14:57"]}
        scale={["118.175", "118.105", "118.035", "117.965", "117.895", "117.825", "117.755", "117.685", "117.615", "117.545", "117.475", "117.405", "117.335"]}
        scaleTop={31}
        scaleStep={33.75}
        last="117.527"
        lastY={344}
        sell={{ lead: "117", big: "52", small: "7" }}
        buy={{ lead: "117", big: "53", small: "6" }}
      />
      <ChartWindow
        place="left-[1084px] top-1"
        active
        title="AUDUSD,M5"
        ohlc="0.72627 0.72631 0.72590 0.72603"
        mode="SELL"
        width={1040}
        height={483}
        step={2}
        price={audusd}
        volume={audusdVolume}
        times={["2 Jan 2017", "3 Jan 00:30", "3 Jan 03:10", "3 Jan 05:50", "3 Jan 08:30", "3 Jan 11:10", "3 Jan 13:50", "3 Jan 16:30", "3 Jan 19:10", "3 Jan 21:50", "4 Jan 00:30", "4 Jan 03:10", "4 Jan 05:50", "4 Jan 08:30", "4 Jan 11:10", "4 Jan 13:50"]}
        scale={["0.72815", "0.72735", "0.72655", "0.72575", "0.72495", "0.72415", "0.72335", "0.72255", "0.72175", "0.72095", "0.72015", "0.71935", "0.71855", "0.71775"]}
        scaleTop={15}
        scaleStep={34.1}
        last="0.72603"
        lastY={106}
        sell={{ lead: "0.72", big: "60", small: "3" }}
        buy={{ lead: "0.72", big: "61", small: "2" }}
        orders={[
          { y: 404, text: "#1617960836 sell 0.01", color: "#5fa070" },
          { y: 426, text: "#1617960836 tp", color: "#b01818" },
        ]}
      />
    </div>
  );
}

const chartTabs = ["GBPUSD,M15", "EURUSD,M1", "AUDUSD,M5", "USDJPY,M1"];

function ChartTabs() {
  return (
    <div className="flex h-[23px] items-start border-t-2 border-black bg-[#f0f0f0] pl-1 text-xs text-[#7a7a7a]">
      {chartTabs.map((t) =>
        t === "AUDUSD,M5" ? (
          <button key={t} className="-mt-px h-5 border border-t-0 border-r-2 border-b-2 border-black bg-white px-[11px] leading-[18px] text-black">
            {t}
          </button>
        ) : (
          <button key={t} className={`mt-[2px] h-[14px] px-[10px] leading-[13px] ${t === "EURUSD,M1" ? "" : "border-r border-[#777]"}`}>
            {t}
          </button>
        ),
      )}
      <div className="ml-auto flex gap-2 pt-1 pr-[6px] text-[#777]">
        <ChevronLeft size={10} />
        <ChevronRight size={10} />
      </div>
    </div>
  );
}

/* ------------------------------------------------------------------ */
/* Terminal                                                            */
/* ------------------------------------------------------------------ */

const inputs =
  "BasicVariables1=-------Variables -------; Lots=0.1; LotModeAuto=false; Risk=1.0; targetpips=10; SpanPips=100; LotMultiplier=1; SimpleLotMultiplier=false; ExponantialLotMultiplier=true; MAGICMA=1234; HigherTF=0; Mid";

const logs = [
  ["20:29:20.962", "SAAD TrendTracker AUDUSD,M5: initialized"],
  ["20:29:20.953", `SAAD TrendTracker AUDUSD,M5 inputs: ${inputs}`],
  ["20:29:19.650", "Expert Market₩SAAD TrendTracker AUDUSD,M5: loaded successfully"],
  ["20:29:17.907", "SAAD TrendTracker EURUSD,M1: initialized"],
  ["20:29:17.897", `SAAD TrendTracker EURUSD,M1 inputs: ${inputs}`],
  ["20:29:16.827", "Expert Market₩SAAD TrendTracker EURUSD,M1: loaded successfully"],
  ["20:29:15.068", "SAAD TrendTracker USDJPY,M1: initialized"],
  ["20:29:15.058", `SAAD TrendTracker USDJPY,M1 inputs: ${inputs}`],
  ["20:29:14.046", "Expert Market₩SAAD TrendTracker USDJPY,M1: loaded successfully"],
  ["20:29:07.977", "Expert SAAD TrendTracker AUDUSD,M5: removed"],
  ["20:29:07.973", "SAAD TrendTracker AUDUSD,M5: uninit reason 1"],
];

const terminalTabs: [string, string?][] = [
  ["매매"], ["노출금액"], ["거래내역"], ["뉴스", "99"], ["알람"], ["메일함", "10"],
  ["시장", "60"], ["거래신호들"], ["도서관"], ["시스템 트레이딩"], ["거래일지"],
];

function Terminal() {
  return (
    <section className="flex border-b border-[#a0a0a0] pt-[2px]">
      <div className="flex w-[15px] shrink-0 flex-col items-center">
        <button aria-label="Close" className="h-[14px] text-[11px] leading-[12px] font-bold">×</button>
        <div className="mb-[2px] flex w-[13px] flex-1 items-center bg-linear-to-b from-[#b9d1ea] to-[#99b4d1] [writing-mode:vertical-rl]">
          <h2 className="mt-auto rotate-180 text-[11px] leading-[13px] [text-orientation:sideways]">터미널</h2>
        </div>
      </div>
      <div className="min-w-0 flex-1 pr-1">
        <div className="flex border-t border-l border-[#828282] bg-white">
          <div className="min-w-0 flex-1">
            <table className="w-full table-fixed border-separate border-spacing-0 text-xs">
              <thead>
                <tr className="h-6 text-[13px] leading-none">
                  <th className="w-[225px] border-r border-b border-[#c4c4c4] border-r-[#e4e4e4] p-0 pl-[6px] text-left font-normal">시간</th>
                  <th className="border-b border-[#c4c4c4] p-0 pl-2 text-left font-normal">메시지</th>
                </tr>
              </thead>
              <tbody>
                {logs.map(([time, text]) => (
                  <tr key={time} className="h-5 odd:bg-[#eaeaea]">
                    <td className="border-r border-b border-[#c4c4c4] p-0 pl-[6px] leading-none">
                      <div className="flex items-center gap-2">
                        <span className="h-2 w-2 rounded-full border border-[#888] bg-[#c8c8c8]" />
                        2017.01.04 {time}
                      </div>
                    </td>
                    <td className="truncate border-b border-[#c4c4c4] p-0 pl-[6px] leading-none">
                      <span className="block leading-[18px]">{text}</span>
                    </td>
                  </tr>
                ))}
                <tr className="h-1">
                  <td className="border-r border-[#c4c4c4] p-0" />
                  <td className="p-0" />
                </tr>
              </tbody>
            </table>
            <div className="flex h-[15px] items-center bg-[#f0f0f0]">
              <ChevronLeft size={13} strokeWidth={3} className="mx-px text-[#555]" />
              <div className="mr-[68px] h-full flex-1 bg-[#cdcdcd]" />
              <ChevronRight size={13} strokeWidth={3} className="mr-px text-[#555]" />
            </div>
          </div>
          <div className="flex w-4 flex-col items-center bg-[#f0f0f0] pt-px pb-4">
            <ChevronUp size={14} strokeWidth={3} className="text-[#555]" />
            <div className="mt-px h-[33px] w-full bg-[#cdcdcd]" />
            <ChevronDown size={14} strokeWidth={3} className="mt-auto text-[#555]" />
          </div>
        </div>
        <div className="flex h-[26px] items-start border-t border-black pl-[3px] text-[13px] text-[#7a7a7a]">
          {terminalTabs.map(([name, count]) =>
            name === "시스템 트레이딩" ? (
              <button key={name} className="-mt-px h-5 border border-t-0 border-r-2 border-b-2 border-black bg-white px-[9px] leading-[18px] text-black">
                {name}
              </button>
            ) : (
              <button key={name} className={`mt-[3px] flex h-[14px] items-center pr-[9px] pl-[10px] leading-[14px] ${name === "도서관" ? "" : "border-r border-[#777]"}`}>
                {name}
                {count && <span className="ml-px translate-y-1 text-[10px] font-bold text-[#d83030]">{count}</span>}
              </button>
            ),
          )}
        </div>
      </div>
    </section>
  );
}

function StatusBar() {
  return (
    <footer className="flex h-[23px] items-center pt-[2px] pl-[2px] text-xs">
      <span className="flex-1">도움말을 보려면 &lt;F1&gt;을 누르십시오.</span>
      <span className="w-[129px] border-l border-[#a0a0a0] pl-[6px]">Default</span>
      <span className="h-[18px] w-[117px] border-l border-[#a0a0a0]" />
      <span className="h-[18px] w-[82px] border-l border-[#a0a0a0]" />
      <span className="h-[18px] w-20 border-l border-[#a0a0a0]" />
      <span className="h-[18px] w-[78px] border-l border-[#a0a0a0]" />
      <span className="h-[18px] w-20 border-l border-[#a0a0a0]" />
      <span className="h-[18px] w-[78px] border-l border-[#a0a0a0]" />
      <span className="flex h-[18px] w-[139px] items-center gap-1 border-l border-[#a0a0a0] pl-[5px]">
        <svg width="24" height="13" viewBox="0 0 24 13">
          {[0, 3, 6, 9, 12, 15, 18, 21].map((x, i) => (
            <g key={x}>
              <rect x={x} y="0" width="2" height={Math.max(2, 9 - i)} fill="#7c9a1e" />
              <rect x={x} y={10 - i} width="2" height={3 + i} fill="#0e4a72" />
            </g>
          ))}
        </svg>
        44104/1447 kb
      </span>
    </footer>
  );
}

/* ------------------------------------------------------------------ */
/* Task bar                                                            */
/* ------------------------------------------------------------------ */

const TaskView = () => (
  <svg width="20" height="16" viewBox="0 0 20 16" fill="none" stroke="#fff" strokeWidth="1.200">
    <rect x="4.500" y="1.500" width="11" height="13" />
    <path d="M2.500 4.500H1v8h1.500M17.500 4.500H19v8h-1.500" />
  </svg>
);

const Folder = () => (
  <svg width="22" height="20" viewBox="0 0 22 20">
    <path d="M1 2h8l1 2h11v14H1z" fill="#f3d06b" />
    <path d="M1 6h20v12H1z" fill="#fbe8a0" />
    <path d="M5 19v-8h12v8h-3v-4H8v4z" fill="#3fa9d8" />
  </svg>
);

const Store = () => (
  <svg width="22" height="24" viewBox="0 0 22 24">
    <path d="M7 7V4c0-3 8-3 8 0v3" fill="none" stroke="#fff" strokeWidth="1.500" />
    <path d="M1 7l20-1v16L1 20z" fill="#fff" />
    <path d="M6 10h4v3H6zM11.500 10H16v3h-4.500zM6 14.500h4v3H6zM11.500 14.500H16v3h-4.500z" fill="#000" />
  </svg>
);

const League = () => (
  <svg width="24" height="24" viewBox="0 0 24 24">
    <rect x="1" y="1" width="22" height="22" fill="#123a78" stroke="#b58f3a" strokeWidth="2" />
    <text x="6" y="18" fontSize="18" fontWeight="700" fill="#e9c968" className="font-['Liberation_Serif',serif]">L</text>
  </svg>
);

const Music = () => (
  <svg width="24" height="24" viewBox="0 0 24 24" fill="none" stroke="#fff" strokeWidth="2">
    <rect width="24" height="24" rx="4" fill="#12a5b4" stroke="none" />
    <circle cx="10" cy="15" r="4" />
    <path d="M14 15V5c1 2 3 2 4 5" />
  </svg>
);

const Talk = () => (
  <svg width="26" height="26" viewBox="0 0 26 26">
    <rect width="26" height="26" rx="1" fill="#fae100" />
    <path d="M13 5c6 0 10 3 10 7.500S19 19 13 19l-4 4 .5-4.500C5.500 17.500 3 15.500 3 12.500 3 8 7 5 13 5z" fill="#3a2020" />
    <text x="5" y="15" fontSize="7" fontWeight="700" fill="#fae100">TALK</text>
  </svg>
);

const Notes = () => (
  <svg width="22" height="24" viewBox="0 0 22 24">
    <path d="M6 2l14 2-4 18L2 19z" fill="#8fd0de" stroke="#4a8c9c" />
    <path d="M16 22l4-18 1 2-2 17z" fill="#e8f5f8" />
    <path d="M8 6l8 1M7 9l8 1M6 12l8 1" stroke="#fff" />
  </svg>
);

const Paint = () => (
  <svg width="24" height="24" viewBox="0 0 24 24">
    <path d="M12 4c6 0 9 4 9 8s-3 5-5 5-2 5-6 5-8-4-8-9 4-9 10-9z" fill="#d8ecf6" stroke="#7aa7bf" />
    <circle cx="7" cy="10" r="2" fill="#e04a3a" />
    <circle cx="12" cy="8" r="2" fill="#f0b93a" />
    <circle cx="6" cy="15" r="2" fill="#3a8fe0" />
    <circle cx="11" cy="15" r="1.500" fill="#111" />
    <path d="M20 1L14 22" stroke="#c9803a" strokeWidth="2" />
  </svg>
);

// Three-colour ring with the blue hub
const Chrome = () => (
  <svg width="22" height="22" viewBox="0 0 22 22">
    <circle cx="11" cy="11" r="10.500" fill="#dd4b3b" />
    <path d="M1.900 5.800A10.500 10.500 0 0 0 10.500 21.500L15.300 13.500 11 11 6.700 13.500z" fill="#2fa34e" />
    <path d="M10.500 21.500A10.500 10.500 0 0 0 20.500 6.500H11l4.300 7z" fill="#fbcd3a" />
    <circle cx="11" cy="11" r="5" fill="#fff" />
    <circle cx="11" cy="11" r="4" fill="#4a8af4" />
  </svg>
);

const apps: { name: string; icon: ReactNode; look: string; open?: boolean }[] = [
  { name: "Task view", icon: <TaskView />, look: "" },
  { name: "Edge", icon: <FaEdgeLegacy size={22} color="#1b84dc" />, look: "", open: true },
  { name: "Explorer", icon: <Folder />, look: "" },
  { name: "Store", icon: <Store />, look: "" },
  { name: "League", icon: <League />, look: "" },
  { name: "Music", icon: <Music />, look: "" },
  { name: "Internet Explorer", icon: <FaInternetExplorer size={22} color="#5cc4f2" />, look: "", open: true },
  { name: "Chrome", icon: <Chrome />, look: "", open: true },
  { name: "Talk", icon: <Talk />, look: "bg-[#b8692b] border-b-2 border-[#f07818]" },
  { name: "Notes", icon: <Notes />, look: "", open: true },
  { name: "MetaTrader", icon: <Mt4Logo size={24} />, look: "bg-[#34383c] border-b-2 border-[#76b9ed]" },
  { name: "Paint", icon: <Paint />, look: "", open: true },
];

function TaskBar() {
  return (
    <nav className="flex h-10 items-stretch bg-[#02040a] text-white">
      <button aria-label="Start" className="flex w-12 items-center justify-center">
        <FaWindows size={17} />
      </button>
      <input
        aria-label="Windows 검색"
        placeholder="Windows 검색"
        className="w-[344px] bg-[#333] pl-2 text-[15px] placeholder:text-[#a0a0a0]"
      />
      {apps.map((a) => (
        <button key={a.name} aria-label={a.name} className={`relative flex w-[49px] items-center justify-center ${a.look}`}>
          {a.icon}
          {a.open && <span className="absolute inset-x-1 bottom-0 h-[2px] bg-[#76b9ed]" />}
        </button>
      ))}
      <div className="ml-auto flex items-center">
        <ChevronUp size={16} className="mr-[7px]" />
        <svg width="17" height="16" viewBox="0 0 17 16" fill="none" stroke="#fff" className="mr-[7px]">
          <path d="M5.500 2.500h11v8h-11M8 13.500h6M11 11v2M.5 1.500h4v4h-4zM2.500 6v7.500H6" />
        </svg>
        <svg width="17" height="14" viewBox="0 0 17 14" fill="none" stroke="#fff" className="mr-2">
          <path d="M1 5h2.500L7 1.500v11L3.500 9H1zM9 5c1 1 1 3 0 4M11 3c2.500 2 2.500 6 0 8" />
          <path d="M13 1c4 3 4 9 0 12" stroke="#777" />
        </svg>
        <span className="mr-3 text-lg">A</span>
        <div className="mr-5 text-center text-xs leading-[18px]">
          <div>오후 9:59</div>
          <div>2017-01-04</div>
        </div>
        <svg width="18" height="18" viewBox="0 0 18 18" fill="none" stroke="#fff" className="mr-[18px]">
          <path d="M1.500 1.500h15v12h-5L9 16.500l-2-3H1.500z" />
        </svg>
        <div className="h-full w-[6px] border-l border-[#555]" />
      </div>
    </nav>
  );
}

/* ------------------------------------------------------------------ */

const menus = ["파일(F)", "보기(V)", "삽입(I)", "차트(C)", "도구(T)", "차트정렬(W)", "도움말(H)"];

export default function App() {
  return (
    <div className="relative flex h-screen flex-col overflow-hidden bg-[#f0f0f0] font-['Noto_Sans','Noto_Sans_CJK_KR',sans-serif] text-black">
      <header className="flex h-[22px] shrink-0 items-center bg-white pl-[2px]">
        <Mt4Logo size={16} />
        <h1 className="ml-[5px] text-xs">16083350: ForexTimeFXTM-ECN-demo - 모의 계좌 - AUDUSD,M5</h1>
        <div className="ml-auto flex items-center pr-[2px]">
          <button aria-label="Minimize" className="flex w-[46px] justify-center">
            <svg width="11" height="11"><path d="M0 5.500h11" stroke="#000" /></svg>
          </button>
          <button aria-label="Restore" className="flex w-[46px] justify-center">
            <svg width="11" height="11" fill="none"><path d="M.5 2.500h8v8h-8zM2.500 2V.5h8v8H9" stroke="#000" /></svg>
          </button>
          <button aria-label="Close" className="flex w-[46px] justify-center">
            <svg width="11" height="11"><path d="M.5.5l10 10M10.500.5l-10 10" stroke="#000" /></svg>
          </button>
        </div>
      </header>

      <nav className="flex h-[21px] shrink-0 items-center gap-[21px] pl-[7px] text-xs">
        {menus.map((m) => (
          <button key={m}>{m}</button>
        ))}
      </nav>

      <div className="flex shrink-0">
        <div className="min-w-0 flex-1">
          <Toolbars />
        </div>
        <div className="flex items-center gap-3 self-stretch border-t border-[#a0a0a0] pr-[6px] pb-[26px]">
          <button aria-label="Search">
            <Svg>
              <circle cx="10" cy="6" r="4" fill="#eef6fd" stroke="#3358c4" strokeWidth="1.200" />
              <path d="M7 9l-5 5" stroke="#3358c4" strokeWidth="2.500" />
            </Svg>
          </button>
          <button aria-label="Chat">
            <svg width="22" height="16" viewBox="0 0 22 16" fill="#f6f6f6" stroke="#777">
              <path d="M15 1c4 0 6 2 6 4.500 0 2-1 3-3 3.800l1 3-3.500-2.500C11 10 8.500 8 8.500 5.500S11 1 15 1z" />
              <path d="M6 6c3 0 5 1.500 5 3.500S9 13 6 13l-3 2 .5-2.500C2 12 1 11 1 9.500 1 7.500 3 6 6 6z" />
            </svg>
          </button>
        </div>
      </div>

      <main className="flex min-h-0 flex-1">
        <aside className="flex w-[238px] shrink-0 flex-col border-t border-[#a0a0a0]">
          <MarketWatch />
          <Navigator />
        </aside>
        <div className="flex min-w-0 flex-1 flex-col">
          <Workspace />
          <ChartTabs />
        </div>
      </main>

      <Terminal />
      <StatusBar />
      <TaskBar />

      {/* Activation notice lies over everything */}
      <div className="pointer-events-none absolute right-[111px] bottom-[104px] text-[#808080]/60">
        <p className="text-xl leading-6">Windows 정품 인증</p>
        <p className="text-base leading-6">[설정]으로 이동하여 Windows를 정품 인증합니다.</p>
      </div>
    </div>
  );
}
